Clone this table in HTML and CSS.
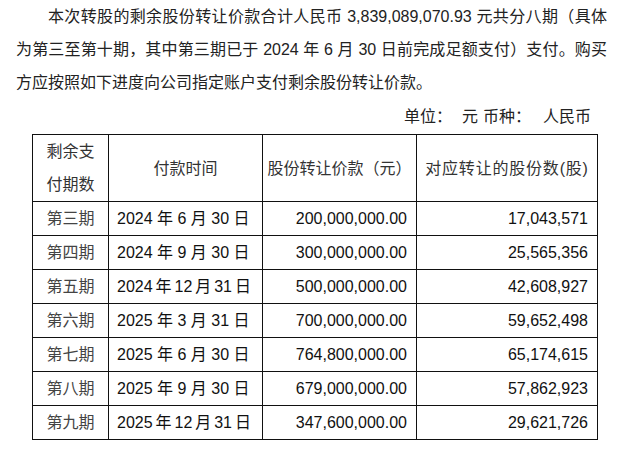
FILE: index.html
```html
<!DOCTYPE html>
<html lang="zh-CN">
<head>
<meta charset="utf-8">
<link rel="stylesheet" href="styles.css">
</head>
<body>
<p class="para"><span class="ln ln-first">本次转股的剩余股份转让价款合计人民币 3,839,089,070.93 元共分八期（具体</span><span class="ln">为第三至第十期，其中第三期已于 2024 年 6 月 30 日前完成足额支付）支付。购买</span><span class="ln ln-last">方应按照如下进度向公司指定账户支付剩余股份转让价款。</span></p>
<div class="unit">单位：<span class="gap gap-a"></span>元<span class="gap gap-b"></span>币种：<span class="gap gap-c"></span>人民币</div>
<table class="sched">
  <thead>
    <tr class="head">
      <th class="c1">剩余支<br>付期数</th>
      <th class="c2">付款时间</th>
      <th class="c3">股份转让价款（元）</th>
      <th class="c4 narrowp">对应转让的股份数(股)</th>
    </tr>
  </thead>
  <tbody>
    <tr><td class="c1">第三期</td><td class="c2">2024 年 6 月 30 日</td><td class="c3">200,000,000.00</td><td class="c4">17,043,571</td></tr>
    <tr><td class="c1">第四期</td><td class="c2">2024 年 9 月 30 日</td><td class="c3">300,000,000.00</td><td class="c4">25,565,356</td></tr>
    <tr><td class="c1">第五期</td><td class="c2 tight">2024 年 12 月 31 日</td><td class="c3">500,000,000.00</td><td class="c4">42,608,927</td></tr>
    <tr><td class="c1">第六期</td><td class="c2">2025 年 3 月 31 日</td><td class="c3">700,000,000.00</td><td class="c4">59,652,498</td></tr>
    <tr><td class="c1">第七期</td><td class="c2">2025 年 6 月 30 日</td><td class="c3">764,800,000.00</td><td class="c4">65,174,615</td></tr>
    <tr><td class="c1">第八期</td><td class="c2">2025 年 9 月 30 日</td><td class="c3">679,000,000.00</td><td class="c4">57,862,923</td></tr>
    <tr><td class="c1">第九期</td><td class="c2 tight">2025 年 12 月 31 日</td><td class="c3">347,600,000.00</td><td class="c4">29,621,726</td></tr>
  </tbody>
</table>
</body>
</html>
```
FILE: styles.css
```css
html, body {
  margin: 0;
  padding: 0;
  background: #ffffff;
}
body {
  font-family: "Liberation Sans", "Noto Sans CJK SC", sans-serif;
  font-size: 16px;
  color: #1a1a1a;
}
.para {
  margin: 0;
  padding: 0 32px 0 16px;
  line-height: 33px;
  color: #222;
}
.ln {
  display: block;
  white-space: nowrap;
  text-align: justify;
  text-align-last: justify;
}
.ln-first {
  padding-left: 32px;
}
.ln-last {
  text-align-last: left;
}
.unit {
  height: 34px;
  line-height: 34px;
  margin-top: 1px;
  text-align: right;
  padding-right: 48px;
  color: #222;
}
.gap {
  display: inline-block;
}
.gap-a { width: 10px; }
.gap-b { width: 5px; }
.gap-c { width: 12px; }
.sched {
  margin-left: 32px;
  width: 561px;
  border-collapse: collapse;
  table-layout: fixed;
}
.sched th, .sched td {
  border: 1px solid #111;
  padding: 0 9px;
  font-weight: normal;
  white-space: nowrap;
  color: #111;
}
.sched .head th {
  height: 66px;
  line-height: 33px;
  text-align: center;
  color: #333;
  padding: 0;
}
.sched tbody td {
  height: 33px;
  line-height: 33px;
}
.sched .c1 { width: 75px; }
.sched .c2 { width: 153px; }
.sched .c3 { width: 153px; }
.sched .c4 { width: 180px; }
.sched tbody .c1 {
  text-align: center;
  color: #444;
  padding: 0;
}
.sched tbody .c2 {
  text-align: left;
  padding-left: 8px;
}
.sched tbody .c2.tight {
  word-spacing: -1.5px;
}
.sched tbody .c3,
.sched tbody .c4 {
  text-align: right;
}
.narrowp {
  letter-spacing: 0.8px;
}
```
